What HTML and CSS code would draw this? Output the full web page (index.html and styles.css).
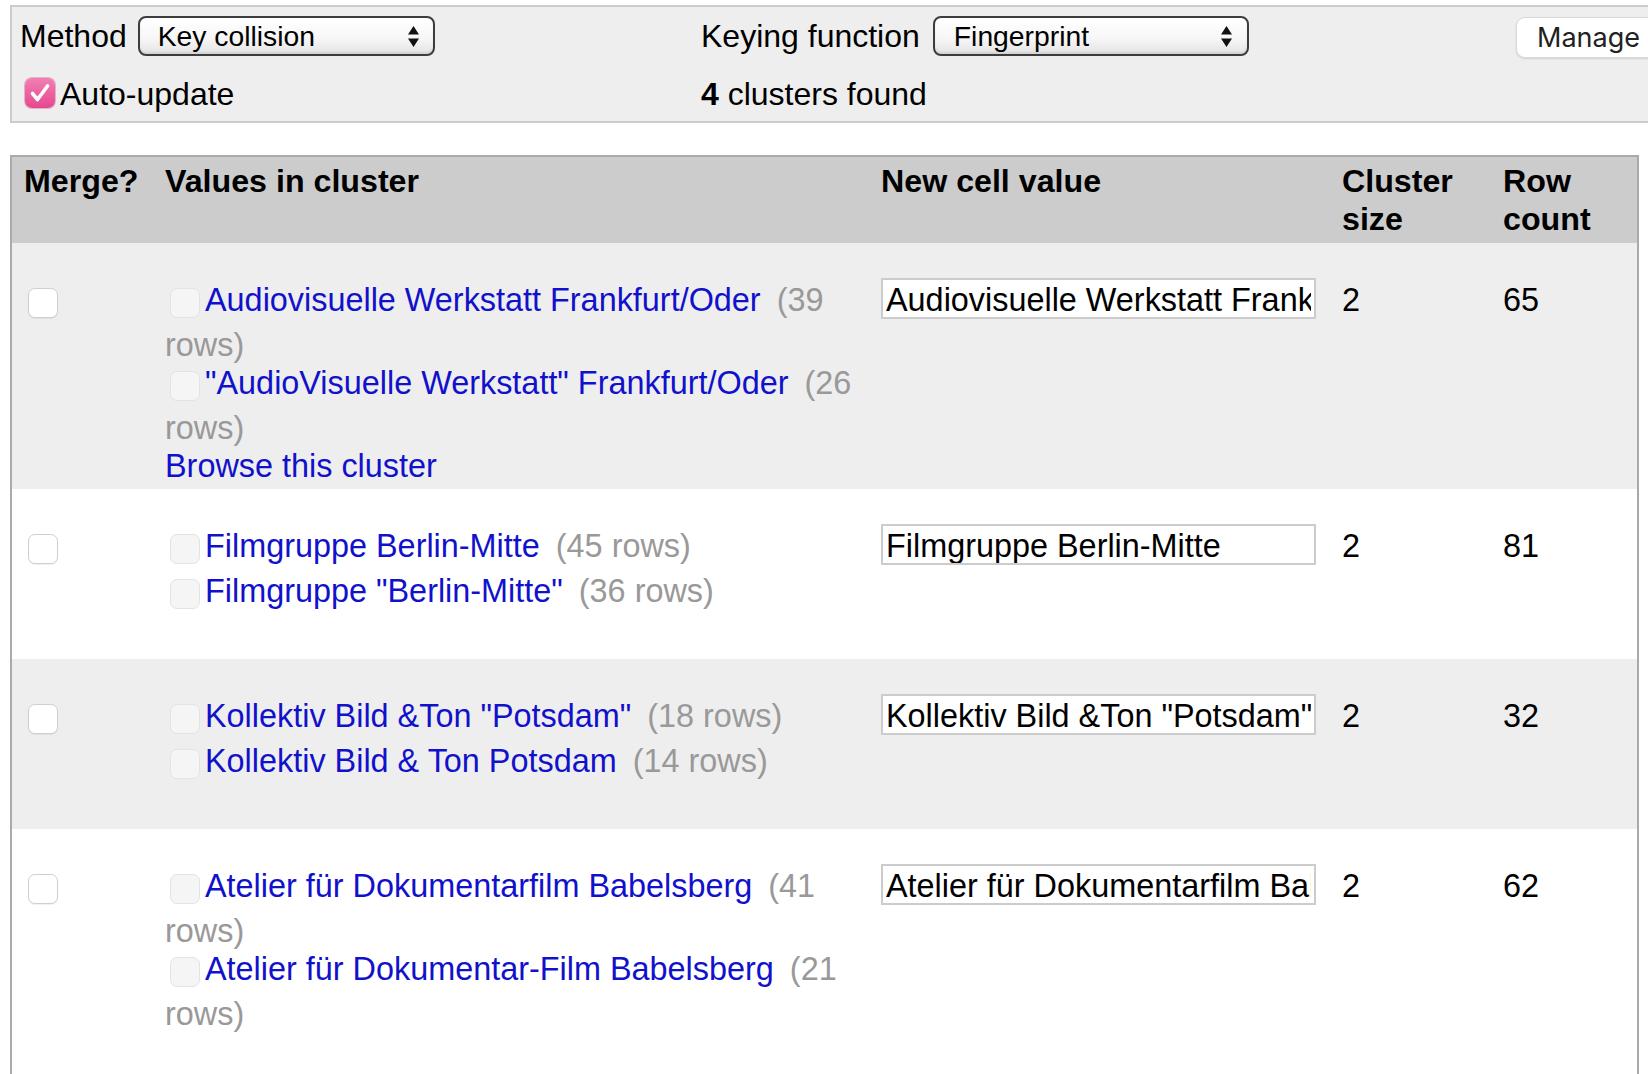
FILE: index.html
```html
<!DOCTYPE html>
<html lang="de">
<head>
<meta charset="utf-8">
<title>Cluster &amp; Edit</title>
<link rel="stylesheet" href="styles.css">
</head>
<body>
<div class="page">
  <div class="controls">
    <div class="ctl">
      <span class="label">Method</span>
      <div class="select select-method">
        <span class="select-text">Key collision</span>
        <svg class="arrows" width="11" height="21" viewBox="0 0 11 21"><path d="M5.5 0 L11 8.5 L0 8.5 Z M0 12.5 L11 12.5 L5.5 21 Z" fill="#111"/></svg>
      </div>
    </div>
    <div class="ctl">
      <span class="label">Keying function</span>
      <div class="select select-keying">
        <span class="select-text">Fingerprint</span>
        <svg class="arrows" width="11" height="21" viewBox="0 0 11 21"><path d="M5.5 0 L11 8.5 L0 8.5 Z M0 12.5 L11 12.5 L5.5 21 Z" fill="#111"/></svg>
      </div>
    </div>
    <div class="ctl ctl-top">
      <button class="manage" type="button">Manage clustering functions</button>
    </div>
    <div class="ctl">
      <span class="cb-on"><svg width="30" height="30" viewBox="0 0 30 30"><path d="M7.5 15.5 L12.5 21.5 L22.5 8" fill="none" stroke="#fff" stroke-width="3.6" stroke-linecap="round" stroke-linejoin="round"/></svg></span>
      <span class="label">Auto-update</span>
    </div>
    <div class="ctl"><span class="label"><b>4</b> clusters found</span></div>
    <div></div>
  </div>

  <table class="clusters">
    <thead>
      <tr>
        <th class="c-merge">Merge?</th>
        <th class="c-values">Values in cluster</th>
        <th class="c-new">New cell value</th>
        <th class="c-size">Cluster size</th>
        <th class="c-count">Row count</th>
      </tr>
    </thead>
    <tbody>
      <tr class="odd">
        <td><span class="cb cb-merge"></span></td>
        <td>
          <div class="entry"><span class="cb cb-val"></span><a href="#">Audiovisuelle Werkstatt Frankfurt/Oder</a> <span class="count">(39 rows)</span></div>
          <div class="entry"><span class="cb cb-val"></span><a href="#">"AudioVisuelle Werkstatt" Frankfurt/Oder</a> <span class="count">(26 rows)</span></div>
          <div class="browse"><a href="#">Browse this cluster</a></div>
        </td>
        <td><input class="newval" type="text" value="Audiovisuelle Werkstatt Frankfurt/Oder"></td>
        <td>2</td>
        <td>65</td>
      </tr>
      <tr class="even">
        <td><span class="cb cb-merge"></span></td>
        <td>
          <div class="entry"><span class="cb cb-val"></span><a href="#">Filmgruppe Berlin-Mitte</a> <span class="count">(45 rows)</span></div>
          <div class="entry"><span class="cb cb-val"></span><a href="#">Filmgruppe "Berlin-Mitte"</a> <span class="count">(36 rows)</span></div>
          <div class="browse hidden"><a href="#">Browse this cluster</a></div>
        </td>
        <td><input class="newval" type="text" value="Filmgruppe Berlin-Mitte"></td>
        <td>2</td>
        <td>81</td>
      </tr>
      <tr class="odd">
        <td><span class="cb cb-merge"></span></td>
        <td>
          <div class="entry"><span class="cb cb-val"></span><a href="#">Kollektiv Bild &amp;Ton "Potsdam"</a> <span class="count">(18 rows)</span></div>
          <div class="entry"><span class="cb cb-val"></span><a href="#">Kollektiv Bild &amp; Ton Potsdam</a> <span class="count">(14 rows)</span></div>
          <div class="browse hidden"><a href="#">Browse this cluster</a></div>
        </td>
        <td><input class="newval" type="text" value="Kollektiv Bild &amp;Ton &quot;Potsdam&quot;"></td>
        <td>2</td>
        <td>32</td>
      </tr>
      <tr class="even">
        <td><span class="cb cb-merge"></span></td>
        <td>
          <div class="entry"><span class="cb cb-val"></span><a href="#">Atelier für Dokumentarfilm Babelsberg</a> <span class="count">(41 rows)</span></div>
          <div class="entry"><span class="cb cb-val"></span><a href="#">Atelier für Dokumentar-Film Babelsberg</a> <span class="count">(21 rows)</span></div>
          <div class="browse hidden"><a href="#">Browse this cluster</a></div>
        </td>
        <td><input class="newval" type="text" value="Atelier für Dokumentarfilm Babelsberg"></td>
        <td>2</td>
        <td>62</td>
      </tr>
    </tbody>
  </table>
</div>
</body>
</html>
```

FILE: styles.css
```css
html, body {
  margin: 0;
  padding: 0;
  overflow: hidden;
  background: #fff;
}

body {
  font-family: "Liberation Sans", Helvetica, Arial, sans-serif;
  font-size: 32px;
  color: #000;
}

.page {
  padding: 5px 0 0 10px;
}

/* ---------- top controls panel ---------- */
.controls {
  width: 1800px;
  box-sizing: border-box;
  background: #eee;
  border: 2px solid #ccc;
  padding: 9px 0 8px 8px;
  display: grid;
  grid-template-columns: 681px 815px auto;
  grid-template-rows: 40px 37px;
  row-gap: 20px;
  margin-bottom: 32px;
}

.ctl {
  display: flex;
  align-items: center;
  line-height: 37px;
  white-space: nowrap;
}

.ctl-top {
  align-items: flex-start;
}

.label {
  display: inline-block;
}

.select {
  box-sizing: border-box;
  height: 40px;
  margin-left: 11px;
  border: 2px solid #3d3d3d;
  border-radius: 8px;
  background: linear-gradient(#ffffff 0%, #f7f7f7 55%, #e4e4e4 100%);
  box-shadow: inset 0 -2px 2px rgba(0, 0, 0, 0.08);
  display: flex;
  align-items: center;
  justify-content: space-between;
  font-size: 28.3px;
}

.select-method {
  width: 297px;
  padding: 0 14px 0 18px;
}

.select-keying {
  width: 316px;
  margin-left: 13px;
  padding: 0 15px 0 19px;
}

.select-text {
  line-height: 36px;
}

.arrows {
  display: block;
}

.manage {
  margin-top: 1px;
  height: 41px;
  padding: 0 20px;
  background: #fff;
  border: 1px solid #d9d9d9;
  border-radius: 9px;
  box-shadow: 0 1px 2px rgba(0, 0, 0, 0.12);
  font-family: Inter, "Noto Sans", sans-serif;
  font-size: 27px;
  color: #222;
  white-space: nowrap;
}

.cb-on {
  display: block;
  width: 30px;
  height: 30px;
  margin: -4px 5px 0 5px;
  border-radius: 7px;
  background: linear-gradient(#f27fb4, #e6478f);
  box-shadow: 0 0 0 1px rgba(214, 60, 130, 0.35);
}

.cb-on svg {
  display: block;
}

/* ---------- cluster table ---------- */
.clusters {
  width: 1629px;
  table-layout: fixed;
  border-collapse: separate;
  border-spacing: 0;
  border: 2px solid #aaa;
  border-bottom: none;
}

.clusters th,
.clusters td {
  box-sizing: border-box;
  text-align: left;
  vertical-align: top;
  line-height: 38px;
  padding: 38px 12px 4px 12px;
}

.clusters td {
  font-size: 32.4px;
}

.clusters th {
  background: #ccc;
  font-weight: bold;
  font-size: 32.2px;
  padding: 5px 6px 5px 12px;
}

.c-merge { width: 141px; }
.c-values { width: 716px; }
.c-new { width: 461px; }
.c-size { width: 161px; }
.c-count { width: 146px; }

.clusters tr.odd td { background: #eee; }
.clusters tr.even td { background: #fff; }

.clusters a {
  color: #11c;
  text-decoration: none;
}

.cb {
  display: inline-block;
  box-sizing: border-box;
  width: 30px;
  height: 30px;
  border-radius: 7px;
  vertical-align: -15px;
  margin-bottom: 8px;
}

.cb-merge {
  margin-left: 4px;
  background: #fff;
  border: 1px solid #cfcfcf;
  box-shadow: 0 1px 1px rgba(0, 0, 0, 0.06);
}

.cb-val {
  margin-left: 5px;
  margin-right: 5px;
  background: #f5f5f5;
  border: 1px solid #e3e3e3;
}

.count {
  color: #999;
  margin-left: 7px;
}

.browse.hidden {
  visibility: hidden;
}

.newval {
  display: block;
  box-sizing: border-box;
  width: 435px;
  height: 41px;
  margin: -3px 0 0 0;
  padding: 3px 3px 0 3px;
  border: 2px solid #ccc;
  background: #fff;
  font-family: "Liberation Sans", Helvetica, Arial, sans-serif;
  font-size: 32.4px;
  color: #000;
  outline: none;
}
```
